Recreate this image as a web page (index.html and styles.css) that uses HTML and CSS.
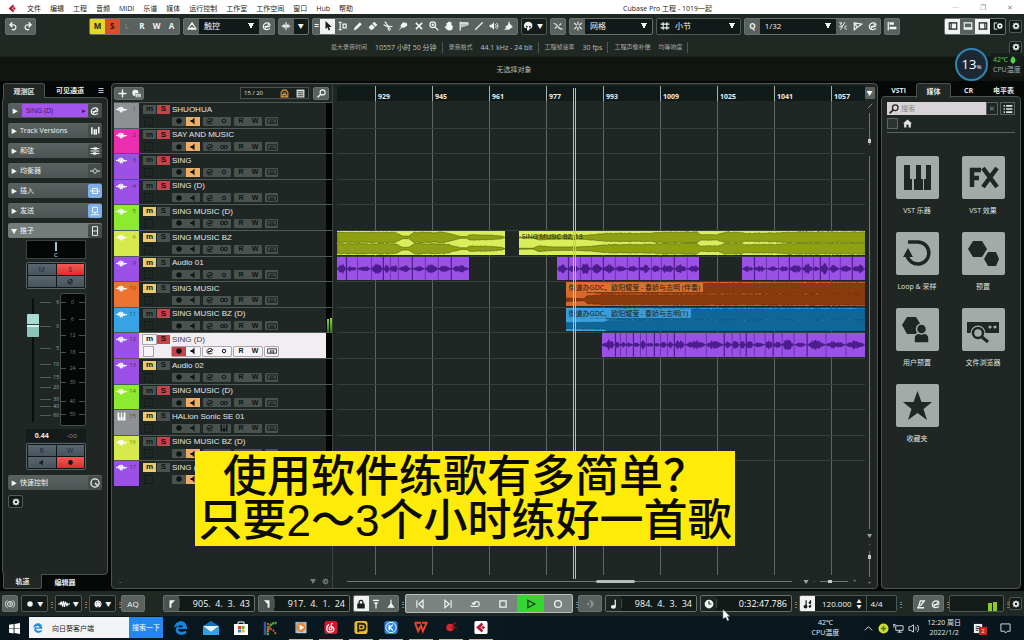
FILE: index.html
```html
<!DOCTYPE html>
<html lang="zh-CN">
<head>
<meta charset="utf-8">
<title>Cubase Pro 工程 - 1019一起</title>
<link rel="stylesheet" href="styles.css">
</head>
<body>
<svg class="sprite" aria-hidden="true">
  <symbol id="logo" viewBox="0 0 16 16"><path d="M9 1 1 8l8 7 2-3-4-4 4-4z" fill="#b01c3a"/><path d="m11 5 3 3-3 3-3-3z" fill="#d0284a"/></symbol>
  <symbol id="undo" viewBox="0 0 16 16"><path d="M4 6h5a4 4 0 1 1-3 7M7 2 3 6l4 4" fill="none" stroke="currentColor" stroke-width="2"/></symbol>
  <symbol id="redo" viewBox="0 0 16 16"><path d="M12 6H7a4 4 0 1 0 3 7M9 2l4 4-4 4" fill="none" stroke="currentColor" stroke-width="2"/></symbol>
  <symbol id="auto" viewBox="0 0 16 16"><path d="M2 12 8 3l6 9zM1 13h4M10 13h5" fill="none" stroke="currentColor" stroke-width="2"/><circle cx="8" cy="12" r="2.5" fill="currentColor"/></symbol>
  <symbol id="edit" viewBox="0 0 16 16"><path d="M4 9h7c3-1 2-6-2-6-5 0-7 3-7 6 0 5 6 6 11 3M4 13 12 4" fill="none" stroke="currentColor" stroke-width="1.800"/></symbol>
  <symbol id="scroll" viewBox="0 0 16 16"><path d="M8 2v12M1 8h5M10 8h5" stroke="currentColor" stroke-width="2"/><path d="m4 4 4 4-4 4zM12 4 8 8l4 4z" fill="currentColor"/></symbol>
  <symbol id="arrow" viewBox="0 0 16 16"><path d="M4 0v13l3-3 2 5 2.500-1-2-4.500H14z" fill="currentColor"/></symbol>
  <symbol id="range" viewBox="0 0 16 16"><path d="M1 2h5M1 14h5M3.500 2v12" stroke="currentColor" stroke-width="1.800"/><path d="M7 4h7v8H7z" fill="currentColor"/><path d="M9 6h3v4H9z" fill="#5b6462"/></symbol>
  <symbol id="pencil" viewBox="0 0 16 16"><path d="m1 15 2-5 8-8 3 3-8 8z" fill="currentColor"/></symbol>
  <symbol id="eraser" viewBox="0 0 16 16"><path d="m1 10 5-5 5 5-4 4H4zM7 4l3-3 5 5-3 3z" fill="currentColor"/></symbol>
  <symbol id="scissors" viewBox="0 0 16 16"><path d="m3 1 5 7 7 1M1 6l7 3 2 4" fill="none" stroke="currentColor" stroke-width="2"/><circle cx="10" cy="13" r="2" fill="none" stroke="currentColor" stroke-width="1.500"/></symbol>
  <symbol id="glue" viewBox="0 0 16 16"><path d="m1 15 4-6-1-2 4-5 6 1 1 4-6 4-2-1z" fill="currentColor"/></symbol>
  <symbol id="cross" viewBox="0 0 16 16"><path d="m3 3 10 10M13 3 3 13" stroke="currentColor" stroke-width="2.500"/></symbol>
  <symbol id="magnify" viewBox="0 0 16 16"><circle cx="6" cy="6" r="4.500" fill="none" stroke="currentColor" stroke-width="2"/><path d="m9 9 6 6M4 6h4M6 4v4" stroke="currentColor" stroke-width="2"/></symbol>
  <symbol id="hand" viewBox="0 0 16 16"><path d="M4 9V3h2v4-6h2v6-6h2v6-5h2v5h2v3c0 4-2 5-5 5-4 0-5-2-8-6l2-1z" fill="currentColor"/></symbol>
  <symbol id="comp" viewBox="0 0 16 16"><path d="M2 1v14M5 3v7M8 3v6M11 3v5M14 3v4M2 3h13" stroke="currentColor" stroke-width="2"/></symbol>
  <symbol id="line" viewBox="0 0 16 16"><path d="M2 14 14 2" stroke="currentColor" stroke-width="2"/></symbol>
  <symbol id="speaker" viewBox="0 0 16 16"><path d="M1 6h3l4-4v12l-4-4H1z" fill="currentColor"/><path d="M10 5c2 2 2 4 0 6M12 3c3 3 3 7 0 10" fill="none" stroke="currentColor" stroke-width="1.400"/></symbol>
  <symbol id="bucket" viewBox="0 0 16 16"><path d="m2 9 7-5 5 5-6 5-3-1z" fill="currentColor"/><path d="M8 1v6M1 13h5" stroke="currentColor" stroke-width="2"/></symbol>
  <symbol id="palette" viewBox="0 0 16 16"><path d="M8 1c4 0 7 2 7 6s-2 5-4 5l-2 3H7l-1-4H3C0 8 2 1 8 1z" fill="currentColor"/><circle cx="6" cy="9" r="1.500" fill="#141a18"/><circle cx="11" cy="9" r="1.500" fill="#141a18"/></symbol>
  <symbol id="curve" viewBox="0 0 16 16"><path d="M1 4c8 0 5 9 14 9M3 12l3-3M10 7l3-3" fill="none" stroke="currentColor" stroke-width="1.800"/></symbol>
  <symbol id="snap" viewBox="0 0 16 16"><path d="M8 1v5M8 10v5M2 3l4 4M14 3l-4 4M2 13l4-4M14 13l-4-4" stroke="currentColor" stroke-width="1.800"/></symbol>
  <symbol id="hash" viewBox="0 0 16 16"><path d="M5 2v12M11 2v12M1 5h14M1 11h14" stroke="currentColor" stroke-width="1.800"/></symbol>
  <symbol id="tuplet" viewBox="0 0 16 16"><path d="M2 3h4L4 6c4 1 2 4-2 3M4 14l7-12M14 8c-4-1-4 6 0 5" fill="none" stroke="currentColor" stroke-width="1.600"/></symbol>
  <symbol id="flagplay" viewBox="0 0 16 16"><path d="M2 2v12l5-4M2 3l12 2-7 5zM5 5v4" fill="none" stroke="currentColor" stroke-width="1.800"/></symbol>
  <symbol id="align" viewBox="0 0 16 16"><path d="M2 1v14" stroke="currentColor" stroke-width="2"/><path d="M4 2h7v4H4zM4 9h11v4H4z" fill="currentColor"/></symbol>
  <symbol id="zoneL" viewBox="0 0 16 16"><path d="M2 3h12v10H2zM5 3v10" fill="none" stroke="currentColor" stroke-width="1.800"/></symbol>
  <symbol id="zoneB" viewBox="0 0 16 16"><path d="M2 3h12v10H2zM2 11h12" fill="none" stroke="currentColor" stroke-width="1.800"/></symbol>
  <symbol id="zoneR" viewBox="0 0 16 16"><path d="M2 3h12v10H2zM11 3v10" fill="none" stroke="currentColor" stroke-width="1.800"/></symbol>
  <symbol id="zoneS" viewBox="0 0 16 16"><path d="M7 3H2v10h5" fill="none" stroke="currentColor" stroke-width="1.500"/><circle cx="11" cy="8" r="3" fill="none" stroke="currentColor" stroke-width="2.500"/></symbol>
  <symbol id="gear" viewBox="0 0 16 16"><circle cx="8" cy="8" r="4" fill="none" stroke="currentColor" stroke-width="3"/><path d="M8 1v3M8 12v3M1 8h3M12 8h3M3 3l2 2M11 11l2 2M13 3l-2 2M5 11l-2 2" stroke="currentColor" stroke-width="2.200"/></symbol>
  <symbol id="wave" viewBox="0 0 20 12"><path d="M0 6h3l1-2 1 4 1-6 2 9 1-10 2 10 1-9 2 6 1-3 1 3 1-2h3" fill="none" stroke="currentColor" stroke-width="1.700"/></symbol>
  <symbol id="keys" viewBox="0 0 16 16"><path d="M1 1h3v8h1v6H1zM7 1h2v8h1v6H6V9h1zM12 1h3v14h-4V9h1z" fill="currentColor"/></symbol>
  <symbol id="versions" viewBox="0 0 16 16"><path d="M3 2v11M7 5v9M10 5v9M14 1v11" stroke="currentColor" stroke-width="2.500"/></symbol>
  <symbol id="chord" viewBox="0 0 16 16"><path d="M1 4h14M1 8h14M1 12h14" stroke="currentColor" stroke-width="1.600"/><path d="M6 2h5v4H6zM5 10h5v4H5z" fill="currentColor"/></symbol>
  <symbol id="eq" viewBox="0 0 16 16"><path d="M0 8h4M12 8h4M8 4l4 4-4 4-4-4z" fill="none" stroke="currentColor" stroke-width="1.500"/></symbol>
  <symbol id="insert" viewBox="0 0 16 16"><path d="M0 8h16M4 4h8v8H4z" fill="none" stroke="currentColor" stroke-width="1.600"/></symbol>
  <symbol id="send" viewBox="0 0 16 16"><path d="M4 2h8v8H4zM1 14h14M8 10v4" fill="none" stroke="currentColor" stroke-width="1.600"/></symbol>
  <symbol id="fader" viewBox="0 0 16 16"><path d="M4 1h8v14H4zM4 8h8" fill="none" stroke="currentColor" stroke-width="1.500"/></symbol>
  <symbol id="knob" viewBox="0 0 16 16"><circle cx="8" cy="8" r="6.500" fill="none" stroke="currentColor" stroke-width="2"/><path d="m8 8 4 4" stroke="currentColor" stroke-width="2"/></symbol>
  <symbol id="mon" viewBox="0 0 16 16"><path d="M3 6h3l5-5v14l-5-5H3z" fill="currentColor"/></symbol>
  <symbol id="dot" viewBox="0 0 16 16"><circle cx="8" cy="8" r="5.500" fill="currentColor"/></symbol>
  <symbol id="ring" viewBox="0 0 16 16"><circle cx="8" cy="8" r="3.500" fill="none" stroke="currentColor" stroke-width="2"/></symbol>
  <symbol id="rings" viewBox="0 0 16 16"><circle cx="4.500" cy="8" r="3.300" fill="none" stroke="currentColor" stroke-width="2"/><circle cx="11.500" cy="8" r="3.300" fill="none" stroke="currentColor" stroke-width="2"/></symbol>
  <symbol id="takes" viewBox="0 0 18 10"><path d="M1 1h16v8H1zM6 3v6M9 3v6M12 3v6" fill="none" stroke="currentColor" stroke-width="1.400"/></symbol>
  <symbol id="plus" viewBox="0 0 16 16"><path d="M8 1v14M1 8h14" stroke="currentColor" stroke-width="2.500"/></symbol>
  <symbol id="preset" viewBox="0 0 16 16"><circle cx="6" cy="7" r="5.500" fill="currentColor"/><path d="M6 8h10v7H6z" fill="currentColor" stroke="#5b6462"/><path d="M8 10.500h6M8 13h6" stroke="#5b6462"/></symbol>
  <symbol id="agent" viewBox="0 0 16 16"><path d="M2 14V6l3-4h6l3 4v8zM5 7h6M5 14v-4h6v4" fill="none" stroke="currentColor" stroke-width="1.900"/></symbol>
  <symbol id="rows" viewBox="0 0 16 16"><path d="M1 1h14v14H1z" fill="currentColor"/><path d="M3 5h10M3 8.500h10M3 12h10" stroke="#1a201e" stroke-width="1.500"/></symbol>
  <symbol id="find" viewBox="0 0 16 16"><circle cx="10" cy="6" r="4.500" fill="none" stroke="currentColor" stroke-width="2"/><path d="m7 9-6 6" stroke="currentColor" stroke-width="2.500"/></symbol>
  <symbol id="home" viewBox="0 0 16 16"><path d="M8 1 0 8h2v7h4v-5h4v5h4V8h2z" fill="currentColor"/></symbol>
  <symbol id="list" viewBox="0 0 16 16"><path d="M1 3h2M1 8h2M1 13h2M5 3h10M5 8h10M5 13h10" stroke="currentColor" stroke-width="2.500"/></symbol>
  <symbol id="power" viewBox="0 0 16 16"><path d="M4 2C-1 6 0 12 4 14M12 2c5 4 4 10 0 12" fill="none" stroke="currentColor" stroke-width="1.500"/><circle cx="8" cy="8" r="4" fill="none" stroke="currentColor" stroke-width="1.500"/><path d="M8 5v4h2" fill="none" stroke="currentColor" stroke-width="1.500"/></symbol>
  <symbol id="midi" viewBox="0 0 16 16"><circle cx="8" cy="8" r="7" fill="currentColor"/><path d="M4 8h1M5 5h1M8 4h1M11 5h1M12 8h1M6 14h4" stroke="#141a18" stroke-width="1.700"/></symbol>
  <symbol id="locL" viewBox="0 0 16 16"><path d="M4 2h9L7 8v6H4z" fill="currentColor"/></symbol>
  <symbol id="locR" viewBox="0 0 16 16"><path d="M12 2H3l6 6v6h3z" fill="currentColor"/></symbol>
  <symbol id="lock" viewBox="0 0 16 16"><path d="M2 7h12v8H2z" fill="currentColor"/><path d="M5 8V5c0-4 6-4 6 0v3" fill="none" stroke="currentColor" stroke-width="2"/></symbol>
  <symbol id="pin" viewBox="0 0 16 16"><path d="M3 2h10M8 8v7" stroke="currentColor" stroke-width="2"/><path d="M4 5h8l-4 5z" fill="currentColor"/></symbol>
  <symbol id="pout" viewBox="0 0 16 16"><path d="M8 1v6" stroke="currentColor" stroke-width="2"/><path d="M2 14h12l-3-4H5zM8 5l3 5H5z" fill="currentColor"/></symbol>
  <symbol id="prev" viewBox="0 0 16 16"><path d="M3 2v12M13 2 6 8l7 6z" fill="none" stroke="currentColor" stroke-width="1.800"/></symbol>
  <symbol id="next" viewBox="0 0 16 16"><path d="M13 2v12M3 2l7 6-7 6z" fill="none" stroke="currentColor" stroke-width="1.800"/></symbol>
  <symbol id="cycle" viewBox="0 0 16 16"><path d="M2 12h9c5 0 5-8 0-8C7 4 6 6 6 8M3 6l3 3 3-3M2 12v-2" fill="none" stroke="currentColor" stroke-width="1.800"/></symbol>
  <symbol id="stop" viewBox="0 0 16 16"><path d="M3 3h10v10H3z" fill="none" stroke="currentColor" stroke-width="2"/></symbol>
  <symbol id="play" viewBox="0 0 16 16"><path d="m3 2 11 6-11 6z" fill="none" stroke="currentColor" stroke-width="2"/></symbol>
  <symbol id="record" viewBox="0 0 16 16"><circle cx="8" cy="8" r="5.500" fill="none" stroke="currentColor" stroke-width="2"/></symbol>
  <symbol id="note" viewBox="0 0 16 16"><path d="M10 1v11" stroke="currentColor" stroke-width="2"/><ellipse cx="7" cy="12.500" rx="4" ry="3" fill="currentColor"/></symbol>
  <symbol id="clock" viewBox="0 0 16 16"><circle cx="8" cy="8" r="7" fill="currentColor"/><path d="M8 3v5h4" fill="none" stroke="#333a38" stroke-width="1.800"/></symbol>
  <symbol id="moon" viewBox="0 0 16 16"><path d="M6 2c10-2 11 12 0 12 5-3 5-9 0-12z" fill="currentColor"/><circle cx="5" cy="8" r="2" fill="currentColor"/></symbol>
  <symbol id="tempo" viewBox="0 0 16 16"><path d="M5 2v10M12 2v4M12 9v3" stroke="currentColor" stroke-width="2"/><circle cx="4" cy="12" r="3" fill="currentColor"/><circle cx="11" cy="6" r="2" fill="currentColor"/><circle cx="11" cy="12" r="2" fill="currentColor"/></symbol>
  <symbol id="metro" viewBox="0 0 16 16"><path d="M2 14h11M4 13 7 3h5M7 11l7-9" fill="none" stroke="currentColor" stroke-width="2.200"/></symbol>
  <symbol id="edge" viewBox="0 0 16 16"><path d="M0 8C1-2 15-3 15 9H5c0 4 5 4 9 2v3C8 18 1 15 2 9c1-3 3-4 5-4-3 0-5 1-7 3zM5 7h5c0-3-5-3-5 0z" fill="currentColor"/></symbol>
</svg>

<header class="menubar">
  <svg class="ico logo"><use href="#logo"/></svg>
  <nav class="menus"><a href="#">文件</a><a href="#">编辑</a><a href="#">工程</a><a href="#">音频</a><a href="#">MIDI</a><a href="#">乐谱</a><a href="#">媒体</a><a href="#">运行控制</a><a href="#">工作室</a><a href="#">工作空间</a><a href="#">窗口</a><a href="#">Hub</a><a href="#">帮助</a></nav>
  <span class="title">Cubase Pro 工程 - 1019一起</span>
  <div class="winbtns"><button aria-label="最小化">─</button><button aria-label="还原">❐</button><button aria-label="关闭">✕</button></div>
</header>

<div class="toolbar">
  <div class="grp history"><button aria-label="撤销"><svg class="ico"><use href="#undo"/></svg></button><button aria-label="重做"><svg class="ico"><use href="#redo"/></svg></button></div>
  <div class="grp states"><button class="mute">M</button><button class="solo">S</button><button class="dim">L</button><button>R</button><button>W</button><button>A</button></div>
  <div class="grp automation"><button aria-label="自动化"><svg class="ico"><use href="#auto"/></svg></button><select class="grow" aria-label="自动化模式"><option>触控</option></select><button aria-label="编辑"><svg class="ico"><use href="#edit"/></svg></button></div>
  <div class="grp scrollgrp"><button aria-label="自动滚动"><svg class="ico"><use href="#scroll"/></svg></button><button class="dark caret" aria-label="滚动选项">▼</button></div>
  <div class="grp tools">
    <span class="grip">=</span>
    <button class="lit" aria-label="选择"><svg class="ico"><use href="#arrow"/></svg></button>
    <button aria-label="范围"><svg class="ico"><use href="#range"/></svg></button>
    <button aria-label="绘制"><svg class="ico"><use href="#pencil"/></svg></button>
    <button aria-label="擦除"><svg class="ico"><use href="#eraser"/></svg></button>
    <button aria-label="分割"><svg class="ico"><use href="#scissors"/></svg></button>
    <button aria-label="胶合"><svg class="ico"><use href="#glue"/></svg></button>
    <button aria-label="静音"><svg class="ico"><use href="#cross"/></svg></button>
    <button aria-label="缩放"><svg class="ico"><use href="#magnify"/></svg></button>
    <button aria-label="手形"><svg class="ico"><use href="#hand"/></svg></button>
    <button aria-label="组合"><svg class="ico"><use href="#comp"/></svg></button>
    <button aria-label="直线"><svg class="ico"><use href="#line"/></svg></button>
    <button aria-label="播放"><svg class="ico"><use href="#speaker"/></svg></button>
    <button aria-label="颜色"><svg class="ico"><use href="#bucket"/></svg></button>
  </div>
  <div class="grp boxed colors"><button aria-label="颜色菜单"><svg class="ico"><use href="#palette"/></svg></button><button class="caret" aria-label="颜色选项">▼</button></div>
  <div class="grp single"><button aria-label="零交叉"><svg class="ico"><use href="#curve"/></svg></button></div>
  <div class="grp snapgrp"><button aria-label="吸附"><svg class="ico"><use href="#snap"/></svg></button><select class="grow" aria-label="吸附类型"><option>网格</option></select></div>
  <div class="grp boxed gridgrp"><svg class="ico"><use href="#hash"/></svg><select class="grow" aria-label="网格类型"><option>小节</option></select></div>
  <div class="grp quant"><button>Q</button><select class="grow" aria-label="量化"><option>1/32</option></select><button aria-label="连音"><svg class="ico"><use href="#tuplet"/></svg></button><button aria-label="应用量化"><svg class="ico"><use href="#flagplay"/></svg></button><button aria-label="编辑量化"><svg class="ico"><use href="#edit"/></svg></button></div>
  <div class="grp single"><button aria-label="对齐"><svg class="ico"><use href="#align"/></svg></button></div>
  <div class="grp zones"><button class="lit" aria-label="左区"><svg class="ico"><use href="#zoneL"/></svg></button><button aria-label="下区"><svg class="ico"><use href="#zoneB"/></svg></button><button class="lit" aria-label="右区"><svg class="ico"><use href="#zoneR"/></svg></button><button class="dark" aria-label="设置窗口"><svg class="ico"><use href="#zoneS"/></svg></button></div>
  <button class="gearbtn" aria-label="工具栏设置"><svg class="ico"><use href="#gear"/></svg></button>
</div>

<div class="infoline">
  <dl class="facts">
    <div><dt>最大录音时间</dt><dd>10557 小时 50 分钟</dd></div>
    <div><dt>录音格式</dt><dd>44.1 kHz - 24 bit</dd></div>
    <div><dt>工程帧速率</dt><dd>30 fps</dd></div>
    <div><dt>工程声像补偿</dt><dd class="small">均等响度</dd></div>
  </dl>
  <button class="gearbtn" aria-label="信息行设置"><svg class="ico"><use href="#gear"/></svg></button>
</div>
<div class="selection">无选择对象</div>

<main class="workspace">
  <aside class="inspector">
    <div class="tabs"><button class="tab on">观测区</button><button class="tab">可见通道</button><button class="tab menu" aria-label="菜单">≡</button></div>
    <div class="panel">
      <div class="section track"><b>▶</b><span class="trackname">SING (D)<i>▸</i></span><svg class="ico"><use href="#edit"/></svg></div>
      <div class="section"><b>▶</b><span>Track Versions</span><svg class="ico"><use href="#versions"/></svg></div>
      <div class="section"><b>▶</b><span>和弦</span><svg class="ico"><use href="#chord"/></svg></div>
      <div class="section"><b>▶</b><span>均衡器</span><svg class="ico"><use href="#eq"/></svg></div>
      <div class="section active"><b>▶</b><span>插入</span><svg class="ico"><use href="#insert"/></svg></div>
      <div class="section active"><b>▶</b><span>发送</span><svg class="ico"><use href="#send"/></svg></div>
      <div class="section open"><b>▼</b><span>推子</span><svg class="ico"><use href="#fader"/></svg></div>
      <div class="channel">
        <div class="pan"><i></i>C</div>
        <div class="pads"><button>M</button><button class="red">S</button><button>·</button><button aria-label="编辑通道"><svg class="ico"><use href="#edit"/></svg></button></div>
        <div class="strip">
          <input class="vol" type="range" min="0" max="100" value="85" aria-label="音量">
          <svg class="scale" viewBox="0 0 20 134" id="dbscale" aria-hidden="true"></svg>
          <svg class="level" viewBox="0 0 26 134" id="dblevel" aria-hidden="true"></svg>
        </div>
        <div class="readout"><strong>0.44</strong><span>-oo</span></div>
        <div class="pads"><button>R</button><button>W</button><button aria-label="监听"><svg class="ico"><use href="#mon"/></svg></button><button class="red" aria-label="录音"><svg class="ico"><use href="#dot"/></svg></button></div>
      </div>
      <div class="section"><b>▶</b><span>快速控制</span><svg class="ico"><use href="#knob"/></svg></div>
      <button class="gearbtn" aria-label="检查器设置"><svg class="ico"><use href="#gear"/></svg></button>
    </div>
    <div class="tabs bottom"><button class="tab on">轨道</button><button class="tab">编辑器</button></div>
  </aside>

  <section class="project">
    <div class="tracklist">
      <div class="listhead">
        <div class="grp"><button aria-label="添加轨道"><svg class="ico"><use href="#plus"/></svg></button><button aria-label="轨道预置"><svg class="ico"><use href="#preset"/></svg></button></div>
        <div class="count"><span>15 / 20</span><svg class="ico amber"><use href="#agent"/></svg><svg class="ico"><use href="#rows"/></svg></div>
        <div class="grp"><button aria-label="查找轨道"><svg class="ico"><use href="#find"/></svg></button></div>
      </div>
      <div class="tracks" id="track-rows"></div>
      <div class="listfoot"><span>-</span><i>▼</i><svg class="ico"><use href="#gear"/></svg></div>
    </div>
    <div class="arrange">
      <div class="view">
        <div class="ruler"><span>929</span><span>945</span><span>961</span><span>977</span><span>993</span><span>1009</span><span>1025</span><span>1041</span><span>1057</span></div>
        <div class="lanes" id="lane-rows"></div>
        <div class="playhead"></div>
      </div>
      <div class="hscroll"><div class="bar"><i></i></div><em>▼</em><em>-</em><div class="zoomer"></div><em>+</em></div>
    </div>
    <div class="vscroll"><button aria-label="标尺选项">▼</button><svg class="ico"><use href="#line"/></svg><div class="vz"></div><div class="vbar"></div><em>▼</em><em>-</em><div class="vz low"></div><em>+</em></div>
  </section>

  <aside class="media">
    <div class="tabs"><button class="tab">VSTi</button><button class="tab on">媒体</button><button class="tab">CR</button><button class="tab">电平表</button></div>
    <div class="panel">
      <div class="searchrow"><label class="search"><svg class="ico"><use href="#find"/></svg><input type="text" placeholder="搜索" aria-label="搜索"></label><button class="clear" aria-label="清除">✕</button><button class="listbtn" aria-label="列表"><svg class="ico"><use href="#list"/></svg></button></div>
      <div class="homerow"><button class="back" aria-label="返回"></button><svg class="ico"><use href="#home"/></svg></div>
      <div class="tiles">
        <a href="#" class="tile"><svg viewBox="0 0 43 43"><path d="M8 9h6v14h2v11H8zM20 9h5v14h2v11h-9V23h2zM30 9h5v25h-7V23h2z"/></svg>VST 乐器</a>
        <a href="#" class="tile"><svg viewBox="0 0 43 43"><path d="M10 12v19M8 14h11M8 22h9M21 12l14 19M35 12 21 31" fill="none" stroke="#202623" stroke-width="4.500"/></svg>VST 效果</a>
        <a href="#" class="tile"><svg viewBox="0 0 43 43"><path d="M12 10h10a11 11 0 1 1-11 13" fill="none" stroke="#202623" stroke-width="3.500"/><path d="m7 25 5-9 5 9z"/></svg>Loop &amp; 采样</a>
        <a href="#" class="tile"><svg viewBox="0 0 43 43"><path d="m6 17 5-8h9l5 8-5 8h-9zM22 27l4-7h8l3 7-3 7h-8z"/></svg>预置</a>
        <a href="#" class="tile"><svg viewBox="0 0 43 43"><path d="m6 17 5-8h9l5 8-5 9h-9z"/><g stroke="#a3aaa8" stroke-width="1.500"><path d="M18 35v-5c0-7 15-7 15 0v5z"/><circle cx="25.500" cy="21" r="5"/></g></svg>用户预置</a>
        <a href="#" class="tile"><svg viewBox="0 0 43 43"><path d="M5 14h32v11H5z"/><circle cx="28" cy="19" r="1.600" fill="#a3aaa8"/><circle cx="33" cy="19" r="1.600" fill="#a3aaa8"/><circle cx="16" cy="25" r="5" fill="#a3aaa8" stroke="#a3aaa8" stroke-width="5"/><circle cx="16" cy="25" r="5" fill="#a3aaa8" stroke="#202623" stroke-width="2.500"/><path d="m20 29 6 5" stroke="#202623" stroke-width="3"/></svg>文件浏览器</a>
        <a href="#" class="tile"><svg viewBox="0 0 43 43"><path d="m21.500 7 4 11H36l-8.500 7L31 36l-9.500-7-9.500 7 3.500-11L7 18h10.500z"/></svg>收藏夹</a>
      </div>
    </div>
  </aside>
</main>

<footer class="transport">
  <div class="grp single"><button aria-label="激活工程"><svg class="ico"><use href="#power"/></svg></button></div>
  <div class="grp boxed menu1"><svg class="ico"><use href="#dot"/></svg><b class="caret">▼</b></div><span class="dots">⋮</span>
  <div class="grp boxed menu1"><svg class="ico wide"><use href="#wave"/></svg><b class="caret">▼</b></div><span class="dots">⋮</span>
  <div class="grp boxed menu1"><svg class="ico"><use href="#midi"/></svg><b class="caret">▼</b></div><span class="dots">⋮</span>
  <div class="grp aq"><button>AQ</button></div>
  <div class="grp pos left"><button aria-label="左定位"><svg class="ico"><use href="#locL"/></svg></button><output>905.  4.  3.  43</output></div>
  <div class="grp pos"><button aria-label="右定位"><svg class="ico"><use href="#locR"/></svg></button><output>917.  4.  1.  24</output></div>
  <div class="grp punch"><button class="lit" aria-label="锁定"><svg class="ico"><use href="#lock"/></svg></button><button aria-label="穿入"><svg class="ico"><use href="#pin"/></svg></button><button aria-label="穿出"><svg class="ico"><use href="#pout"/></svg></button></div><span class="dots">⋮</span>
  <div class="grp deck"><button aria-label="上一个"><svg class="ico"><use href="#prev"/></svg></button><button aria-label="下一个"><svg class="ico"><use href="#next"/></svg></button><button aria-label="循环"><svg class="ico"><use href="#cycle"/></svg></button><button aria-label="停止"><svg class="ico"><use href="#stop"/></svg></button><button class="go" aria-label="播放"><svg class="ico"><use href="#play"/></svg></button><button aria-label="录音"><svg class="ico"><use href="#record"/></svg></button></div><span class="dots">⋮</span>
  <div class="grp aq off"><button aria-label="预卷"><svg class="ico"><use href="#moon"/></svg></button></div>
  <div class="grp pos"><button class="flat" aria-label="小节位置"><svg class="ico"><use href="#note"/></svg></button><output>984.  4.  3.  34</output></div>
  <div class="grp pos"><button class="flat" aria-label="时间位置"><svg class="ico"><use href="#clock"/></svg></button><output class="time">0:32:47.786</output></div><span class="dots">⋮</span>
  <div class="grp boxed tempo"><button class="lit" aria-label="速度轨"><svg class="ico"><use href="#tempo"/></svg></button><output>120.000</output><span class="spin"><i>▲</i><i>▼</i></span><output class="sig">4/4</output></div><span class="dots">⋮</span>
  <div class="grp click"><button aria-label="节拍器"><svg class="ico"><use href="#metro"/></svg></button><button aria-label="节拍器设置"><svg class="ico"><use href="#edit"/></svg></button></div><span class="dots">⋮</span>
  <div class="grp boxed perf"><i></i><i></i></div><span class="dots">⋮</span>
  <button class="gearbtn" aria-label="走带设置"><svg class="ico"><use href="#gear"/></svg></button>
</footer>

<div class="taskbar">
  <button class="start" aria-label="开始"><svg viewBox="0 0 12 12"><path d="M0 2l5-1v5H0zM6 1l6-1v6H6zM0 6.500h5v5l-5-1zM6 6.500h6V12l-6-1z" fill="#fff"/></svg></button>
  <div class="websearch"><svg class="ico ie"><use href="#edge"/></svg><input type="text" value="向日葵客户端" aria-label="网页搜索"><button>搜索一下</button></div>
  <div class="apps">
    <svg class="blue" viewBox="0 0 16 16"><use href="#edge" width="14" height="14" x="1" y="1"/></svg>
    <svg viewBox="0 0 16 16"><path d="M0 6l8-5 8 5v9H0z" fill="#1272c0"/><path d="M0 6h16l-8 6z" fill="#e9f4fc"/><path d="m0 7 8 5 8-5v8H0z" fill="#2ea3e8"/></svg>
    <svg viewBox="0 0 16 16"><path d="M5 5V2h6v3" fill="none" stroke="#fff"/><path d="M1 4h14v11H1z" fill="#fff"/><path d="M5 6h3v3H5z" fill="#e0452c"/><path d="M8.500 6h3v3h-3z" fill="#5fae2e"/><path d="M5 9.500h3v3H5z" fill="#2089d8"/><path d="M8.500 9.500h3v3h-3z" fill="#f0b323"/></svg>
    <svg viewBox="0 0 16 16"><path d="M2 2v13" stroke="#395a9a" stroke-width="2.500"/><path d="M5 15C4 8 8 2 14 3" fill="none" stroke="#4fae3c" stroke-width="2.500" stroke-dasharray="2 .5"/><path d="M7 9c3 0 5 3 6 6M5 3v9" fill="none" stroke="#d6552c" stroke-width="2" stroke-dasharray="2 1"/></svg>
    <svg class="run" viewBox="0 0 16 16"><path d="M2 2h12v12H2z" fill="#8db4cc"/><path d="M4 4h9v10H4z" fill="#c8cfd2"/><circle cx="8" cy="8" r="5" fill="#e48a35"/><path d="m6.500 5 5 3-5 3z" fill="#fff"/></svg>
    <svg class="run" viewBox="0 0 16 16"><rect x="1" y="1" width="14" height="14" rx="3" fill="#d6152f"/><path d="M10 4c-2-1-2 1-1 5 0 2-3 2-3 0s4-3 5 0-2 4-4 4c-5 0-4-7-1-8" fill="none" stroke="#fff" stroke-width="1.300"/></svg>
    <svg class="run" viewBox="0 0 16 16"><rect x="1" y="1" width="14" height="14" rx="3" fill="#e8bd2d"/><path d="M5 13V4h4c5 0 5 7 0 7H6" fill="none" stroke="#28230f" stroke-width="2"/><circle cx="8.500" cy="7.500" r="1.500" fill="#28230f"/></svg>
    <svg class="run" viewBox="0 0 16 16"><rect x="1" y="1" width="14" height="14" rx="3" fill="#2585dd"/><circle cx="8" cy="8" r="5.500" fill="none" stroke="#fff"/><path d="M6 5v6M10 5 6.500 8l3.500 3" fill="none" stroke="#fff" stroke-width="1.400"/></svg>
    <svg class="run" viewBox="0 0 16 16"><path d="M1 3h7M2 4l3 8 3-6 2 6 4-9M9 3h6" fill="none" stroke="#e8452c" stroke-width="2.200"/></svg>
    <svg class="run" viewBox="0 0 16 16"><circle cx="7" cy="8" r="4" fill="#d9252c"/><path d="m10 5 3-2M8 8h6" stroke="#8e1a1f" stroke-width="1.500"/></svg>
    <svg class="run" viewBox="0 0 16 16"><rect x="1" y="1" width="14" height="14" rx="2" fill="#fff"/><use href="#logo" x="2" y="2" width="12" height="12"/></svg>
  </div>
  <div class="tray">
    <div class="stack">42℃<br>CPU温度</div>
    <div class="trayicons">
      <svg viewBox="0 0 12 12"><path d="m2 8 4-4 4 4" fill="none" stroke="#dfe5e6"/></svg>
      <svg viewBox="0 0 12 12"><circle cx="6" cy="6" r="5.500" fill="#d9dc2c"/><path d="M6 3v6M3 6h6" stroke="#2c8a2a" stroke-width="1.800"/></svg>
      <svg viewBox="0 0 12 12"><path d="M3 3h8v5H3zM7 8v2M5 10h5M1 1v4M0 2h3" fill="none" stroke="#dfe5e6"/></svg>
      <svg viewBox="0 0 12 12"><path d="M1 4h2l3-2v8L3 8H1zM8 4c1 1 1 3 0 4M10 2c2 2 2 6 0 8" fill="none" stroke="#dfe5e6"/></svg>
    </div>
    <div class="stack">12:20 周日<br>2022/1/2</div>
    <div class="badge"><svg viewBox="0 0 12 12"><path d="M1 1h9v10H1z" fill="#eef2f2"/><path d="M3 4h5M3 6h5M3 8h3" stroke="#1a2126"/></svg><span>2</span></div>
    <svg class="chat" viewBox="0 0 12 12"><path d="M1 1h10v8H8l-2 2-1-2H1z" fill="none" stroke="#dfe5e6"/></svg>
  </div>
</div>

<div class="cpu"><div class="dial">13<small>%</small></div><div class="temp"><b>42℃</b> <svg viewBox="0 0 8 10"><path d="M4 0c4 3 5 8 0 10C-1 8 0 3 4 0z" fill="#4fd34a"/></svg><br>CPU温度</div></div>
<div class="caption">使用软件练歌有多简单？<br>只要2～3个小时练好一首歌</div>
<svg class="pointer" viewBox="0 0 10 14"><path d="M1 0v11l3-2 2 4 2-1-2-4h3z" fill="#fff" stroke="#333" stroke-width=".5"/></svg>
<script src="app.js"></script>
</body>
</html>
```
FILE: styles.css
```css
* { box-sizing: border-box; }
html, body { height: 100%; }
body {
  margin: 0;
  display: flex;
  flex-direction: column;
  overflow: hidden;
  background: #0a0f0d;
  color: #dfe4e2;
  font: 8px/1 "Open Sans", "Noto Sans", "Noto Sans CJK SC", sans-serif;
  white-space: nowrap;
}
button, input, select { font: inherit; color: inherit; border: 0; padding: 0; margin: 0; background: none; border-radius: 0; }
a { color: inherit; text-decoration: none; }
i, em { font-style: normal; }
.sprite { position: absolute; width: 0; height: 0; }
.ico { width: 10px; height: 10px; flex: none; display: block; }
.ico.wide { width: 12px; }
.caret { font-size: 6px; font-weight: 400; }

/* menu bar */
.menubar { height: 14px; flex: none; display: flex; align-items: center; background: #fff; color: #222; font-size: 7px; }
.logo { margin: 2px 10px 0 8px; width: 9px; height: 9px; }
.menus { display: flex; gap: 9px; padding-top: 2px; }
.title { margin-left: 270px; padding-top: 2px; }
.winbtns { margin-left: auto; display: flex; gap: 18px; padding-right: 10px; color: #888; }
.winbtns button { width: 9px; }

/* shared button groups */
.grp { display: flex; height: 17px; flex: none; background: #59625f; border: 1px solid #68716e; border-radius: 2px; align-items: stretch; overflow: hidden; color: #f2f5f4; }
.grp > button { flex: 1 1 0; display: flex; align-items: center; justify-content: center; font-weight: 700; }
.grp > button.caret { font-weight: 400; }
.grp.boxed { background: #141c1a; border-color: #4f5956; align-items: center; }
.grp .lit { background: #f1f3f3; color: #15201d; }
.grp .dark { background: #131b19; }
.grp select { appearance: none; padding: 0 5px; height: 15px; min-width: 0; flex: none; width: 60px; background: #111a18 conic-gradient(from -27deg at 50% 100%, #eef1f0 54deg, transparent 0) no-repeat right 5px center / 6px 6px; }
.gearbtn { width: 13px; height: 13px; border: 1px solid #4f5956; border-radius: 2px; background: #141c1a; display: flex; align-items: center; justify-content: center; flex: none; color: #eef1f0; }
.gearbtn .ico { width: 8px; height: 8px; }

/* toolbar */
.toolbar { height: 24px; flex: none; display: flex; align-items: center; gap: 3px; padding: 0 2px 0 5px; background: #202824; }
.history { width: 31px; }
.states { width: 91px; margin-left: 50px; }
.states .mute { background: #e3d72f; color: #222; }
.states .solo { background: #d5502b; color: #331008; }
.states .dim { color: #87908d; font-weight: 400; }
.automation { width: 92px; }
.scrollgrp { width: 31px; }
.tools { width: 206px; }
.tools .grip { width: 7px; align-self: center; text-align: center; font-weight: 700; }
.colors { width: 26px; }
.single { width: 16px; }
.snapgrp { width: 84px; }
.grp.snapgrp select { width: 67px; }
.gridgrp { width: 85px; padding-left: 3px; }
.grp.gridgrp select { flex: 1; }
.quant { width: 137px; }
.grp.quant select { width: 76px; }
.zones { width: 62px; margin-left: auto; }

/* info line and selection line */
.infoline { height: 19px; flex: none; display: flex; justify-content: space-between; align-items: center; padding: 0 2px 0 331px; background: #202824; border-bottom: 1px solid #18211f; }
.facts { display: flex; margin: 0; align-items: center; font-size: 7px; color: #b9c0bd; }
.facts > div { display: flex; gap: 8px; align-items: center; height: 11px; padding-right: 5px; margin-right: 6px; border-right: 1px solid #4c5653; }
.facts dt, .facts .small { font-size: 6px; color: #a3aba8; }
.facts dd { margin: 0; }
.selection { height: 24px; flex: none; display: flex; align-items: center; justify-content: center; padding-left: 4px; background: #10160f; color: #b6bcb8; font-size: 7px; }

/* workspace */
.workspace { flex: 1; min-height: 0; display: flex; gap: 3px; padding: 2px 3px 2px 2px; background: #050807; }
.tabs { display: flex; height: 14px; flex: none; padding-left: 1px; }
.tab { color: #e4e8e6; font-size: 7px; font-weight: 700; border: 1px solid transparent; border-bottom: 0; flex: 1; }
.tab.on { background: #202724; border-color: #4a5451; border-radius: 3px 3px 0 0; height: 15px; z-index: 1; }
.panel { flex: 1; min-height: 0; display: flex; flex-direction: column; background: #202623; border: 1px solid #4a5451; border-radius: 4px; }

.inspector { width: 106px; display: flex; flex-direction: column; flex: none; }
.inspector .tab { flex: none; width: 42px; }
.inspector .tab:nth-child(2) { width: 50px; }
.inspector .tab.menu { width: 12px; }
.inspector .panel { padding: 5px; gap: 5px; }
.inspector .tabs.bottom .tab { width: 39px; }
.inspector .tabs.bottom .tab:nth-child(2) { width: 46px; }
.tabs.bottom .tab.on { border: 1px solid #4a5451; border-top: 0; border-radius: 0 0 3px 3px; margin-top: -1px; }
.section { height: 15px; flex: none; display: flex; align-items: center; background: linear-gradient(#5a6361, #4c5553); border-radius: 2px; color: #f1f4f3; }
.section b { width: 12px; text-align: center; font-size: 6px; font-weight: 400; }
.section span { flex: 1; font-size: 7px; }
.section > .ico { padding: 2px; width: 14px; height: 14px; background: #444d4b; border-radius: 2px; }
.section.active > .ico { background: #7fb0ea; }
.section.open { background: #747c7a; }
.section.track b { width: 14px; }
.trackname { display: flex; justify-content: space-between; align-items: center; height: 13px; padding: 0 2px 0 4px; background: #a254ec; color: #32174f; }
.channel { width: 60px; margin: -3px 0 0 18px; display: flex; flex-direction: column; gap: 3px; }
.pan { height: 19px; background: #050706; border: 1px solid #3c4442; display: flex; flex-direction: column; align-items: center; gap: 1px; font-size: 6px; }
.pan i { width: 2px; height: 9px; background: #9fc4cd; margin-top: 1px; }
.pads { display: grid; grid-template-columns: 1fr 1fr; gap: 1px; height: 27px; padding: 1px; background: #10171a; border: 1px solid #59646a; border-radius: 2px; }
.pads button { display: flex; align-items: center; justify-content: center; background: linear-gradient(#5a666f, #48545d); color: #20282c; font-size: 7px; }
.pads .red { background: linear-gradient(#f25a55, #dc2e2c); }
.pads .ico { width: 7px; height: 7px; color: #12181a; }
.strip { display: flex; height: 134px; align-items: center; padding-top: 2px; }
.vol { appearance: none; writing-mode: vertical-lr; direction: rtl; width: 14px; height: 123px; flex: none; }
.vol::-webkit-slider-runnable-track { height: 123px; width: 14px; background: linear-gradient(#0a0e0d, #0a0e0d) center / 2px 100% no-repeat; }
.vol::-webkit-slider-thumb { appearance: none; width: 12px; height: 23px; margin-left: 1px; border-radius: 1px; background: linear-gradient(#a8dcd4 0 10px, #22413d 10px 11px, #d6f1ec 11px 13px, #8cc4bc 13px); }
.scale { width: 20px; height: 134px; flex: none; }
.level { width: 26px; height: 134px; flex: none; }
.readout { display: flex; justify-content: space-around; align-items: center; height: 13px; margin-bottom: -2px; background: #151b1a; font-size: 7px; color: #7d8583; }
.readout strong { color: #e8ecea; }
.inspector .panel > .gearbtn { width: 15px; }

/* project window */
.project { flex: 1; min-width: 0; display: flex; border: 1px solid #4a5451; border-radius: 4px; background: #202623; }
.tracklist { width: 221px; flex: none; display: flex; flex-direction: column; padding-left: 2px; border-right: 1px solid #3b4643; }
.listhead { height: 18px; flex: none; display: flex; align-items: center; padding-right: 3px; gap: 4px; }
.listhead .grp { height: 13px; width: 30px; }
.listhead .grp:last-child { width: 16px; }
.listhead .ico { width: 9px; height: 9px; }
.count { margin-left: auto; display: flex; align-items: center; gap: 7px; height: 12px; width: 69px; border: 1px solid #48514e; background: #1a201e; padding: 0 3px; font-size: 6px; }
.count span { flex: 1; }
.amber { color: #e69a3c; }
.tracks { height: 384px; flex: none; display: grid; grid-template-rows: repeat(15, 1fr); }
.trk { display: grid; grid-template-columns: 25px 1fr 6px; min-height: 0; border-top: 1px solid #4d5a56; }
.chip { display: flex; justify-content: space-between; padding: 2px 3px 0 2px; color: #fff; }
.chip .ico { width: 11px; height: 9px; }
.chip span { font-size: 6px; line-height: 9px; color: #0008; }
.body { display: grid; grid-template-columns: 33px 1fr; grid-template-rows: 12px 12px; align-items: center; }
.ms { display: flex; gap: 1px; padding-left: 4px; }
.ms button, .ctl button { height: 9px; width: 13px; background: #49524f; color: #0e1412; font: bold 8px/8px "Liberation Sans", sans-serif; display: flex; align-items: center; justify-content: center; }
.name { font: 8px/11px "Liberation Sans", "Noto Sans CJK SC", sans-serif; color: #e3e7e5; }
.freeze { width: 9px; height: 9px; margin-left: 5px; border: 1px solid #161c1a; }
.ctl { display: flex; gap: 3px; }
.ctl > div { display: flex; border-radius: 1px; background: #49524f; }
.ctl button { width: 14px; background: none; font-size: 7px; }
.ctl .one button { width: 13px; }
.ctl .ico { width: 8px; height: 8px; }
.ctl .one .ico { width: 10px; height: 6px; }
.ms .m-on { background: #e9cd6c; }
.ms .s-on, .ctl .rec-on { background: #c8424a; }
.ctl .mon-on { background: #eeae68; }
.meter { background: #030504; display: flex; gap: 1px; align-items: flex-end; justify-content: center; }
.meter i { width: 2px; height: 14px; background: linear-gradient(#8fd626, #2f7d14); }
.meter i:first-child { height: 13px; }
.trk.sel .body { background: #f1edf2; }
.trk.sel .name { color: #444; }
.trk.sel .ctl > div, .trk.sel .ms button:first-child, .trk.sel .freeze { background: #f6f4f6; box-shadow: 0 0 0 1px #aaa6ab; border: 0; }
.listfoot { margin-top: auto; height: 14px; display: flex; align-items: center; gap: 6px; padding: 0 3px; color: #77807d; }
.listfoot span { flex: 1; padding-left: 2px; }
.listfoot i { font-size: 6px; }
.listfoot .ico { width: 7px; height: 7px; }

.arrange { flex: 1; min-width: 0; display: flex; flex-direction: column; padding-left: 4px; }
.view { flex: 1; position: relative; display: flex; flex-direction: column; background: repeating-linear-gradient(90deg, #5c6864 0 1px, transparent 1px 57px) 38px 3px no-repeat; }
.ruler { height: 15px; margin-top: 2px; display: flex; padding-left: 38px; overflow: hidden; flex: none; background: #101a18; }
.ruler span { width: 57px; flex: none; border-left: 1px solid #a8b0ad; padding: 7px 0 0 2px; font-size: 7px; font-weight: 700; color: #e8ecea; }
.lanes { height: 384px; flex: none; margin-top: 1px; display: grid; grid-template-rows: repeat(15, 1fr); }
.lane { position: relative; border-top: 1px solid #33423e; min-height: 0; }
.lane:first-child { border-color: transparent; }
.clip { position: absolute; top: 0; bottom: 1px; overflow: hidden; }
.clip svg { display: block; width: 100%; height: 100%; }
.clip .label { position: absolute; left: 0; top: 1px; padding: 0 3px; font-size: 7px; line-height: 9px; color: #241a10; }
.playhead { position: absolute; left: 236px; top: 4px; bottom: -4px; width: 3px; border: solid #b9c1be; border-width: 0 1px; }
.hscroll { height: 13px; flex: none; display: flex; align-items: center; gap: 5px; padding: 0 9px 0 10px; color: #a0a8a5; }
.hscroll em, .vscroll em { font-size: 5px; }
.bar { flex: 1; height: 1px; background: #6e7875; display: flex; align-items: center; }
.bar i { margin-left: 56%; width: 39px; height: 3px; flex: none; background: #b6bdba; border-radius: 2px; }
.hscroll em:nth-of-type(1) { margin-left: 7px; }
.zoomer { width: 28px; height: 5px; background: radial-gradient(circle at 10px 50%, #c3cac7 2px, transparent 2px), linear-gradient(#6e7875, #6e7875) center / 100% 1px no-repeat; }
.vscroll { width: 12px; flex: none; display: flex; flex-direction: column; align-items: center; padding: 3px 3px 2px 0; gap: 4px; color: #a0a8a5; }
.vscroll button { width: 10px; height: 12px; background: #59625f; color: #fff; font-size: 6px; border-radius: 1px; }
.vscroll .ico { width: 6px; height: 6px; }
.vz { width: 5px; height: 32px; margin: 0 0 7px; background: radial-gradient(circle at 50% 28px, #c3cac7 2px, transparent 2px), linear-gradient(#6e7875, #6e7875) center / 1px 100% no-repeat; }
.vbar { width: 1px; flex: 1; background: #6e7875; }
.vz.low { height: 26px; margin: 0; background: radial-gradient(circle at 50% 6px, #c3cac7 2px, transparent 2px), linear-gradient(#6e7875, #6e7875) center / 1px 100% no-repeat; }

/* media rack */
.media { width: 140px; flex: none; display: flex; flex-direction: column; }
.media .tabs { padding: 0; }
.media .panel { padding: 4px 5px; margin-top: -1px; }
.searchrow { display: flex; height: 13px; margin-top: 1px; }
.search { flex: 1; min-width: 0; display: flex; align-items: center; background: #d7d3d6; color: #222; padding-left: 2px; gap: 2px; }
.search input { min-width: 0; flex: 1; width: 20px; font-size: 7px; }
.search input::placeholder { color: #888; opacity: 1; }
.clear { width: 12px; border: 1px solid #59625f; color: #8b9491; font-size: 7px; }
.listbtn { width: 15px; margin-left: 2px; border: 1px solid #59625f; display: flex; align-items: center; justify-content: center; }
.homerow { display: flex; align-items: center; gap: 5px; height: 18px; border-bottom: 1px solid #59625f; flex: none; }
.homerow .ico { width: 9px; height: 9px; }
.back { width: 11px; height: 11px; border: 1px solid #5b6663; background: #2c3532; }
.tiles { display: grid; grid-template-columns: 66px 66px; grid-auto-rows: 76px; padding-top: 23px; margin-left: -3px; }
.tile { display: flex; flex-direction: column; align-items: center; gap: 8px; font-size: 7px; }
.tile svg { width: 43px; height: 43px; background: #a3aaa8; border-radius: 2px; fill: #202623; }

/* transport */
.transport { height: 25px; flex: none; display: flex; align-items: center; gap: 3px; padding: 0 2px; background: #202824; }
.transport .dots { width: 3px; text-align: center; margin: 0 -1px 0 -3px; font-size: 8px; }
.transport .menu1 { width: 27px; justify-content: space-evenly; }
.transport .dots + .menu1 { margin-left: 2px; }
.transport .menu1 .ico:not(.wide) { width: 8px; height: 8px; }
.aq { width: 24px; }
.aq button { font-weight: 400; }
.aq.off { color: #8b9390; }
.pos { width: 92px; background: #121a18; }
.pos.left { margin-left: 15px; }
.grp.pos > button { flex: none; width: 15px; background: #4a5350; }
.grp.pos > button.flat { background: #1d2522; }
.pos output { flex: 1; align-self: center; text-align: right; padding-right: 4px; font-size: 9px; white-space: pre; border-left: 1px solid #3d4744; }
.pos .time { color: #fff; }
.punch { width: 46px; }
.grp.deck { width: 168px; height: 19px; background: #7b8381; border-color: #b8bebc; margin-left: 1px; }
.deck .go { background: #35d632; color: #123a10; }
.tempo { width: 98px; margin-left: 2px; }
.grp.tempo > button { flex: none; width: 15px; height: 15px; }
.tempo output { padding-left: 7px; }
.spin { display: flex; flex-direction: column; font-size: 5px; margin-left: 5px; }
.tempo .sig { border-left: 1px solid #4f5956; padding: 4px 0 3px 4px; margin-left: 4px; }
.click { width: 31px; margin-left: auto; }
.grp.perf { width: 55px; justify-content: flex-end; align-items: flex-end; gap: 1px; padding-right: 6px; }
.perf i { width: 4px; height: 9px; background: #8cc820; }
.perf i:first-child { height: 8px; }

/* Windows taskbar */
.taskbar { height: 24px; flex: none; display: flex; align-items: stretch; background: linear-gradient(90deg, #07141c, #0a1820 40%, #07161c); color: #e6eaeb; }
.start { width: 29px; }
.start svg { width: 11px; height: 11px; vertical-align: middle; }
.websearch { display: flex; align-items: center; width: 134px; margin: 1px 0 2px; background: #f3f4f5; color: #222; flex: none; }
.websearch .ie { color: #2490e0; margin: 0 4px; }
.websearch input { flex: 1; min-width: 0; padding-left: 5px; font-size: 7px; }
.websearch button { width: 34px; align-self: stretch; background: #2486ee; color: #fff; font-size: 7px; }
.apps { display: flex; align-items: stretch; gap: 6px; margin-left: 6px; }
.apps svg { width: 24px; height: 24px; padding: 4px; }
.apps .blue { color: #1685dc; }
.apps .run { border-bottom: 1px solid #c8bc9e; }
.tray { margin-left: auto; display: flex; align-items: center; gap: 8px; padding-right: 13px; }
.stack { text-align: center; font-size: 7px; line-height: 10px; }
.trayicons { display: flex; gap: 4px; margin-left: 16px; }
.trayicons svg { width: 11px; height: 11px; }
.badge { position: relative; margin: 0 8px 0 4px; }
.badge svg { width: 11px; height: 11px; display: block; }
.badge span { position: absolute; left: 6px; top: 4px; width: 8px; height: 8px; background: #d9201f; text-align: center; font-size: 6px; line-height: 8px; }
.chat { width: 11px; height: 11px; }

/* floating layers */
.cpu { position: absolute; right: 1px; top: 48px; display: flex; align-items: center; gap: 3px; }
.dial { width: 33px; height: 33px; border: 2px solid #2f86b4; border-radius: 50%; background: #1c2833; display: flex; align-items: center; justify-content: center; font-size: 13px; color: #fff; }
.dial small { font-size: 6px; padding-top: 4px; }
.temp { width: 32px; padding: 2px; background: #171d1bcc; font-size: 7px; line-height: 10px; color: #a9b0ae; }
.temp b { color: #4fd34a; font-weight: 400; }
.temp svg { width: 6px; height: 8px; vertical-align: middle; }
.caption { position: absolute; left: 195px; top: 451px; width: 540px; height: 95px; padding-top: 4px; background: #ffeb0a; color: #0c0c05; text-align: center; font: 500 44px/44px "Liberation Sans", "Noto Sans CJK SC", sans-serif; }
.pointer { position: absolute; left: 722px; top: 609px; width: 9px; height: 13px; }
```
FILE: app.js
```js
const PURPLE = '#9b51e6', GREEN = '#8eea2e', LIME = '#d6ea4e', GREY = '#8f9094';
const trackData = [
  { n: 1, name: 'SHUOHUA', color: GREY, solo: 1, mon: 1 },
  { n: 2, name: 'SAY AND MUSIC', color: '#e92fb0', solo: 1, mon: 1, stereo: 1 },
  { n: 3, name: 'SING', color: PURPLE, solo: 1, mon: 1 },
  { n: 4, name: 'SING (D)', color: PURPLE, solo: 1 },
  { n: 5, name: 'SING MUSIC (D)', color: GREEN, mute: 1, stereo: 1 },
  { n: 6, name: 'SING MUSIC BZ', color: LIME, mute: 1, stereo: 1 },
  { n: 9, name: 'Audio 01', color: PURPLE, mute: 1 },
  { n: 10, name: 'SING MUSIC', color: '#ec7430', mute: 1, stereo: 1 },
  { n: 11, name: 'SING MUSIC BZ (D)', color: '#35a3e6', solo: 1, stereo: 1, live: 1 },
  { n: 12, name: 'SING (D)', color: PURPLE, solo: 1, rec: 1, sel: 1 },
  { n: 13, name: 'Audio 02', color: PURPLE, mute: 1 },
  { n: 14, name: 'SING MUSIC (D)', color: GREEN, solo: 1, mon: 1, stereo: 1 },
  { n: 15, name: 'HALion Sonic SE 01', color: GREY, mute: 1, keys: 1 },
  { n: 16, name: 'SING MUSIC BZ (D)', color: LIME, solo: 1, mon: 1, stereo: 1 },
  { n: 17, name: 'SING (D)', color: PURPLE, mute: 1, mon: 1 }
];
const ico = id => `<svg class="ico"><use href="#${id}"/></svg>`;
const btn = (label, inner, on) => `<button aria-label="${label}"${on ? ` class="${on}"` : ''}>${inner}</button>`;

document.getElementById('track-rows').innerHTML = trackData.map(t => `
<div class="trk${t.sel ? ' sel' : ''}">
  <div class="chip" style="background:${t.color}">${ico(t.keys ? 'keys' : 'wave')}<span>${t.n}</span></div>
  <div class="body">
    <div class="ms">${btn('静音', 'm', t.mute && 'm-on')}${btn('独奏', 'S', t.solo && 's-on')}</div>
    <div class="name">${t.name}</div>
    <div class="freeze"></div>
    <div class="ctl">
      <div>${btn('录音', ico('dot'), t.rec && 'rec-on')}${btn('监听', ico('mon'), t.mon && 'mon-on')}</div>
      <div>${btn('编辑', ico('edit'))}${btn('声道', ico(t.keys ? 'keys' : t.stereo ? 'rings' : 'ring'))}</div>
      <div>${btn('读取', 'R')}${btn('写入', 'W')}</div>
      <div class="one">${btn('分轨', ico('takes'))}</div>
    </div>
  </div>
  <div class="meter">${t.live ? '<i></i><i></i>' : ''}</div>
</div>`).join('');

let seed = 7;
const rnd = () => (seed = (seed * 16807) % 2147483647) / 2147483647;

// Amplitude at x, interpolated from [x, amp] points.
function envelope(points, x) {
  for (let i = 1; i < points.length; i++) {
    const [x0, a0] = points[i - 1], [x1, a1] = points[i];
    if (x <= x1) return a0 + (a1 - a0) * (x - x0) / (x1 - x0 || 1);
  }
  return points[points.length - 1][1];
}
function wave(width, mid, amp, rough) {
  const up = [], down = [];
  for (let x = 0; x <= width; x += 1) {
    const a = Math.max(0.3, amp(x) * (1 - rough * rnd()));
    up.push(`${x},${(mid - a).toFixed(1)}`);
    down.unshift(`${x},${(mid + a).toFixed(1)}`);
  }
  return `<polygon points="${up.concat(down).join(' ')}"/>`;
}

const START = 337, SPAN = 529;
const clips = [
  { lane: 5, x0: 337, x1: 505, bg: '#d8ee5a', fill: '#8fa012', edge: '#4d5712',
    env: [[0, 5.6], [58, 5.6], [66, 1.5], [72, 1.5], [77, 5.6], [108, 5.6], [124, 1], [130, 1], [133, 3], [155, 2.5], [165, 1.5], [168, 0.3]] },
  { lane: 5, x0: 519, x1: 866, bg: '#d8ee5a', fill: '#8fa012', edge: '#4d5712', label: 'SING MUSIC BZ_13',
    env: [[0, 0.5], [14, 0.5], [20, 3], [35, 2], [60, 2], [75, 3], [90, 4.5], [136, 4.8], [138, 5.8], [178, 6], [182, 3], [198, 3], [206, 5.8], [223, 5.8], [225, 4.5], [262, 5], [270, 6], [347, 6]] },
  { lane: 6, x0: 337, x1: 469, cuts: [9, 20, 34, 46, 53, 61, 75, 88, 101, 114] },
  { lane: 6, x0: 557, x1: 700, cuts: [11, 23, 34, 46, 58, 70, 82, 94, 104, 117, 130] },
  { lane: 6, x0: 743, x1: 866, cuts: [12, 24, 36, 47, 60, 71, 78, 87, 98, 110] },
  { lane: 7, x0: 566, x1: 866, bg: '#d4692b', fill: '#8b3a0e', edge: '#5e260a', label: '街道办GDC、欧阳耀莹 - 春娇与志明 (伴奏)', tag: '#d9712f',
    env: [[0, 2], [18, 1], [21, 4.5], [40, 5.5], [300, 6]] },
  { lane: 8, x0: 566, x1: 866, bg: '#3ba2de', fill: '#0f6799', edge: '#0b4a70', label: '街道办GDC、欧阳耀莹 - 春娇与志明(1)', tag: '#3a9bd6',
    env: [[0, 3.5], [38, 4], [42, 5.8], [300, 6.2]] },
  { lane: 9, x0: 603, x1: 866, cuts: [13, 18, 24, 31, 38, 44, 52, 58, 65, 72, 83, 104, 122, 130, 138, 144, 152, 163, 171, 180, 192, 205, 224, 244] }
];

const laneHtml = trackData.map(() => '');
for (const c of clips) {
  const w = c.x1 - c.x0;
  let art;
  if (c.cuts) {
    const slices = [0, ...c.cuts, w + 1];
    const peaks = slices.map(() => 3 + rnd() * 3.5);
    const amp = x => {
      const i = slices.findIndex((s, k) => x >= s && x < slices[k + 1]);
      const t = (x - slices[i]) / (slices[i + 1] - slices[i]);
      return Math.sin(Math.PI * t) * peaks[i];
    };
    art = `<g fill="#4c1d8c">${wave(w, 12, amp, 0.6)}</g>` +
      c.cuts.map((s, i) => `<path d="M${s}.5 0V24" stroke="#4c1d8c" stroke-width="${i % 3 ? 0.6 : 1.2}"/>`).join('');
  } else {
    const amp = x => envelope(c.env, x);
    art = `<g fill="${c.fill}" stroke="${c.edge}" stroke-width=".6">${wave(w, 6.5, amp, 0.2)}${wave(w, 18, amp, 0.2)}</g>`;
  }
  const bg = c.bg || PURPLE;
  const label = c.label ? `<span class="label"${c.tag ? ` style="background:${c.tag}"` : ''}>${c.label}</span>` : '';
  laneHtml[c.lane] += `<div class="clip" style="left:${(c.x0 - START) / SPAN * 100}%;width:${w / SPAN * 100}%;background:${bg}"><svg viewBox="0 0 ${w} 24" preserveAspectRatio="none">${art}</svg>${label}</div>`;
}
document.getElementById('lane-rows').innerHTML = laneHtml.map(h => `<div class="lane">${h}</div>`).join('');

const marks = [['6', 9], ['0', 33], ['5', 55], ['10', 71], ['15', 84], ['20', 94], ['30', 106], ['40', 113], ['60', 122]];
document.getElementById('dbscale').innerHTML = marks.map(([t, y]) =>
  `<path d="M0 ${y}.5h11" stroke="#525c59"/><text x="19" y="${y + 2}" text-anchor="end" font-size="5" fill="#a0a8a5">${t}</text>`).join('');
const levels = [['0', 9], ['6', 26], ['12', 42], ['18', 59], ['24', 75], ['30', 89], ['40', 108], ['50', 121]];
document.getElementById('dblevel').innerHTML = '<rect x=".5" y=".5" width="25" height="132" rx="2" fill="#060807" stroke="#454e4b"/>' +
  levels.map(([t, y]) => `<path d="M1 ${y}.5h5M19 ${y}.5h6" stroke="#4a5350"/><text x="12.500" y="${y + 2}" text-anchor="middle" font-size="5" fill="#7b8481">${t}</text>`).join('');
```
